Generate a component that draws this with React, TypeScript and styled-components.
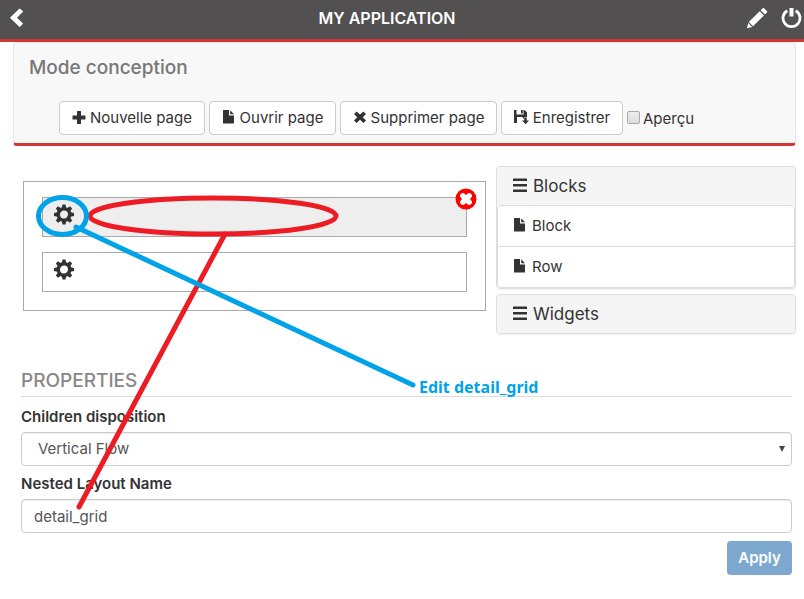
import React from "react";
import styled, { createGlobalStyle } from "styled-components";

const GlobalStyle = createGlobalStyle`
  * { box-sizing: border-box; }
  body {
    margin: 0;
    background: #fff;
    color: #333;
    font-family: Inter, "Liberation Sans", sans-serif;
    font-size: 15px;
    line-height: 20px;
  }
  button, input, select { font: inherit; color: inherit; }
`;

const Page = styled.div`
  position: relative;
  padding-bottom: 24px;
`;

const Header = styled.header`
  display: grid;
  grid-template-columns: 34px 1fr 64px;
  align-items: center;
  height: 42px;
  padding-bottom: 3px;
  background: #525050;
  color: #fff;
  border-bottom: 3px solid #d43535;
`;

const AppTitle = styled.h1`
  margin: 0;
  text-align: center;
  font-size: 16px;
  line-height: 20px;
  font-weight: 600;
`;

const IconButton = styled.button`
  display: flex;
  padding: 0;
  border: 0;
  background: none;
  color: inherit;
  cursor: pointer;
`;

const HeaderStart = styled.div`
  padding-left: 10px;
`;

const HeaderActions = styled.div`
  display: flex;
  justify-content: flex-end;
  gap: 13px;
  padding-right: 2px;
`;

const DesignBar = styled.section`
  margin: 0 8px 0 13px;
  padding: 15px 15px 8px;
  height: 104px;
  background: #f8f8f8;
  border: 1px solid #e7e7e7;
  border-bottom: 3px solid #d43535;
  border-radius: 4px;
`;

const BarTitle = styled.h2`
  margin: 0 0 23px;
  font-size: 19px;
  line-height: 20px;
  font-weight: 500;
  color: #777;
`;

const Actions = styled.div`
  display: flex;
  align-items: center;
  gap: 4px;
  padding-left: 30px;
`;

const ToolButton = styled.button<{ $width: number }>`
  display: flex;
  align-items: center;
  justify-content: center;
  gap: 4px;
  min-width: ${(p) => p.$width}px;
  height: 34px;
  padding: 0 8px;
  white-space: nowrap;
  background: #fff;
  border: 1px solid #ccc;
  border-radius: 4px;
  cursor: pointer;
`;

const CheckLabel = styled.label`
  display: flex;
  align-items: center;
  gap: 3px;
  padding-top: 2px;
`;

const CheckBox = styled.input`
  appearance: none;
  width: 13px;
  height: 13px;
  margin: 0 0 4px;
  border: 1px solid #a9a9a9;
  border-radius: 2px;
  background: linear-gradient(#eee, #dcdcdc);
  &:checked { background: #337ab7; }
`;

const Workspace = styled.div`
  display: grid;
  grid-template-columns: 463fr 300fr;
  align-items: start;
  gap: 10px;
  padding: 20px 8px 0 23px;
`;

const Canvas = styled.section`
  display: grid;
  gap: 15px;
  margin-top: 15px;
  padding: 15px 18px 18px;
  border: 1px solid #a9a9a9;
`;

const LayoutRow = styled.div<{ $selected?: boolean }>`
  position: relative;
  height: 40px;
  padding: 5px 10px;
  border: 1px solid #a9a9a9;
  background: ${(p) => (p.$selected ? "#eee" : "#fff")};
`;

const RemoveButton = styled(IconButton)`
  position: absolute;
  top: -10px;
  right: -11px;
`;

const Sidebar = styled.aside`
  display: grid;
  gap: 5px;
`;

const Panel = styled.section`
  border: 1px solid #ddd;
  border-radius: 4px;
  box-shadow: 0 1px 1px rgba(0, 0, 0, 0.05);
`;

const PanelHeading = styled.h3`
  display: flex;
  align-items: center;
  gap: 6px;
  margin: 0;
  height: 38px;
  padding: 0 15px;
  border-radius: 3px;
  background: #f5f5f5;
  font-size: 17px;
  line-height: 20px;
  font-weight: 400;
`;

const BlockList = styled.ul`
  list-style: none;
  margin: 0;
  padding: 0;
  border: 1px solid #ddd;
  border-radius: 4px;
`;

const BlockItem = styled.li`
  display: flex;
  align-items: center;
  gap: 5px;
  height: 40px;
  padding: 0 15px;
  & + & {
    height: 41px;
    border-top: 1px solid #ddd;
  }
`;

const Properties = styled.form`
  display: grid;
  margin-top: 36px;
  padding: 0 12px 0 21px;
`;

const SectionTitle = styled.h2`
  margin: 0 0 10px;
  height: 27px;
  border-bottom: 1px solid #ddd;
  font-size: 19px;
  line-height: 22px;
  font-weight: 500;
  color: #888;
`;

const FieldLabel = styled.label`
  margin-bottom: 5px;
  line-height: 20px;
  font-weight: 600;
`;

const Field = styled.div`
  position: relative;
  display: grid;
  margin-bottom: 8px;
  color: #555;
`;

const TextBox = styled.input`
  width: 100%;
  height: 34px;
  padding: 0 12px;
  background: #fff;
  border: 1px solid #ccc;
  border-radius: 4px;
  box-shadow: inset 0 1px 1px rgba(0, 0, 0, 0.075);
`;

const Select = styled(TextBox).attrs({ as: "select" })`
  appearance: none;
  padding: 0 16px;
`;

const Caret = styled.svg`
  position: absolute;
  top: 14px;
  right: 7px;
  pointer-events: none;
`;

const ApplyButton = styled.button`
  justify-self: end;
  min-width: 65px;
  height: 34px;
  padding: 0 8px;
  font-weight: 600;
  color: #fff;
  background: #7ea9cf;
  border: 0;
  border-radius: 4px;
`;

const Annotations = styled.svg`
  position: absolute;
  top: 0;
  left: 0;
  pointer-events: none;
  fill: none;
  stroke-width: 5;
  stroke-linecap: round;
`;

const Note = styled.text`
  fill: #00a2e8;
  font-family: "Noto Sans", sans-serif;
  font-size: 16px;
  font-weight: 700;
`;

const PlusIcon = () => (
  <svg width="14" height="14" fill="currentColor" aria-hidden="true">
    <path d="M5.500 0h3q.5 0 .5.500V4.500h4q.5 0 .5.500v3q0 .5-.5.500H9v4q0 .5-.5.500h-3Q5 13 5 12.500V8.500H1Q.5 8.500.5 8V5Q.5 4.500 1 4.500h4V.500Q5 0 5.500 0Z" />
  </svg>
);

const FileIcon = () => (
  <svg width="14" height="18" fill="currentColor" aria-hidden="true">
    <path d="M1.500 1H7v5.500h5V14q0 .6-.6.6H1.600Q1 14.600 1 14V1.500Q1 1 1.500 1ZM8.200 1.200 12 5.200H8.200Z" />
  </svg>
);

const TimesIcon = () => (
  <svg width="14" height="14" fill="currentColor" aria-hidden="true">
    <path d="M3.500.500 7 3.600 10.500.500 13 3 9.800 6.200 13 9.500l-2.500 2.500L7 8.800 3.500 12 1 9.500l3.200-3.300L1 3Z" />
  </svg>
);

const SaveIcon = () => (
  <svg width="15" height="18" fill="currentColor" aria-hidden="true">
    <path d="M0 1h2.500v4.500h7V1h1L13 3.200V8h-2.800v1.500H8.800V8H3v6H0ZM7 1h1.800v3.500H7ZM10.300 8.500h2.400v3H15l-3.500 3.700L8 11.500h2.300Z" />
  </svg>
);

const MenuIcon = () => (
  <svg width="15" height="18" fill="currentColor" aria-hidden="true">
    <path d="M1 1.500h14V4H1ZM1 7h14v2.500H1ZM1 12.500h14V15H1Z" />
  </svg>
);

const GearIcon = () => (
  <svg width="22" height="22" viewBox="-11 -11 22 22" aria-hidden="true">
    <circle r="5.700" cy=".5" fill="none" stroke="currentColor" strokeWidth="3.400" />
    <g fill="currentColor" transform="translate(0 .5)">
      {[0, 45, 90, 135, 180, 225, 270, 315].map((angle) => (
        <path key={angle} d="M-2.200-6.500-1.500-10h3L2.200-6.500Z" transform={`rotate(${angle})`} />
      ))}
    </g>
  </svg>
);

const RemoveIcon = () => (
  <svg width="22" height="22" viewBox="-11 -11 22 22" aria-hidden="true">
    <circle r="10.500" fill="#f00" />
    <path
      fill="#fff"
      d="M-4-6H-2.500L0-4 2.500-6H4L6-4V-2.500L4 0 6 2.500V4L4 6H2.500L0 4-2.500 6H-4L-6 4V2.500L-4 0-6-2.500V-4Z"
    />
  </svg>
);

const BackIcon = () => (
  <svg width="14" height="20" fill="currentColor" aria-hidden="true">
    <path d="M9.300.7q.4-.4.8 0l2.700 2.400q.4.400 0 .8L7 9.700l5.800 5.600q.4.400 0 .8l-2.700 2.600q-.4.400-.8 0L.4 10.200q-.5-.5 0-1Z" />
  </svg>
);

const PencilIcon = () => (
  <svg width="22" height="22" fill="currentColor" aria-hidden="true">
    <path d="M16.700 1.200q.7-.7 1.400 0l2.800 2.800q.7.700 0 1.400l-2 2-4.200-4.200ZM13.700 4.200l4.200 4.200L7 19.300 2.800 15.100ZM2.200 15.900 6.200 19.900 1 21.300Z" />
  </svg>
);

const PowerIcon = () => (
  <svg width="21" height="22" fill="none" stroke="currentColor" aria-hidden="true">
    <path d="M6.300 3.700a8.500 8.500 0 1 0 8.400 0" strokeWidth="2.800" />
    <path d="M10.500 1v8.500" strokeWidth="4" />
  </svg>
);

export default function App() {
  return (
    <>
      <GlobalStyle />
      <Page>
        <Header>
          <HeaderStart>
            <IconButton type="button" aria-label="Back"><BackIcon /></IconButton>
          </HeaderStart>
          <AppTitle>MY APPLICATION</AppTitle>
          <HeaderActions>
            <IconButton type="button" aria-label="Edit"><PencilIcon /></IconButton>
            <IconButton type="button" aria-label="Power"><PowerIcon /></IconButton>
          </HeaderActions>
        </Header>

        <DesignBar>
          <BarTitle>Mode conception</BarTitle>
          <Actions>
            <ToolButton type="button" $width={146}><PlusIcon />Nouvelle page</ToolButton>
            <ToolButton type="button" $width={127}><FileIcon />Ouvrir page</ToolButton>
            <ToolButton type="button" $width={157}><TimesIcon />Supprimer page</ToolButton>
            <ToolButton type="button" $width={122}><SaveIcon />Enregistrer</ToolButton>
            <CheckLabel><CheckBox type="checkbox" />Aperçu</CheckLabel>
          </Actions>
        </DesignBar>

        <Workspace>
          <Canvas>
            <LayoutRow $selected>
              <IconButton type="button" aria-label="Row settings"><GearIcon /></IconButton>
              <RemoveButton type="button" aria-label="Remove row"><RemoveIcon /></RemoveButton>
            </LayoutRow>
            <LayoutRow>
              <IconButton type="button" aria-label="Row settings"><GearIcon /></IconButton>
            </LayoutRow>
          </Canvas>
          <Sidebar>
            <Panel>
              <PanelHeading><MenuIcon />Blocks</PanelHeading>
              <BlockList>
                <BlockItem><FileIcon />Block</BlockItem>
                <BlockItem><FileIcon />Row</BlockItem>
              </BlockList>
            </Panel>
            <Panel>
              <PanelHeading><MenuIcon />Widgets</PanelHeading>
            </Panel>
          </Sidebar>
        </Workspace>

        <Properties onSubmit={(e: React.FormEvent) => e.preventDefault()}>
          <SectionTitle>PROPERTIES</SectionTitle>
          <FieldLabel htmlFor="disposition">Children disposition</FieldLabel>
          <Field>
            <Select id="disposition">
              <option>Vertical Flow</option>
            </Select>
            <Caret width="6" height="6" fill="#444" aria-hidden="true">
              <path d="M0 0h6L3 6Z" />
            </Caret>
          </Field>
          <FieldLabel htmlFor="layout-name">Nested Layout Name</FieldLabel>
          <Field>
            <TextBox id="layout-name" defaultValue="detail_grid" />
          </Field>
          <ApplyButton type="submit">Apply</ApplyButton>
        </Properties>

        <Annotations width="804" height="599">
          <g stroke="#ed1c24">
            <ellipse cx="213" cy="216" rx="123" ry="18" />
            <path d="M225 234 79 507" />
          </g>
          <g stroke="#00a2e8">
            <ellipse cx="62.500" cy="216" rx="24" ry="18.500" />
            <path d="M76 227 413 385" />
          </g>
          <Note x="419" y="393">Edit detail_grid</Note>
        </Annotations>
      </Page>
    </>
  );
}
